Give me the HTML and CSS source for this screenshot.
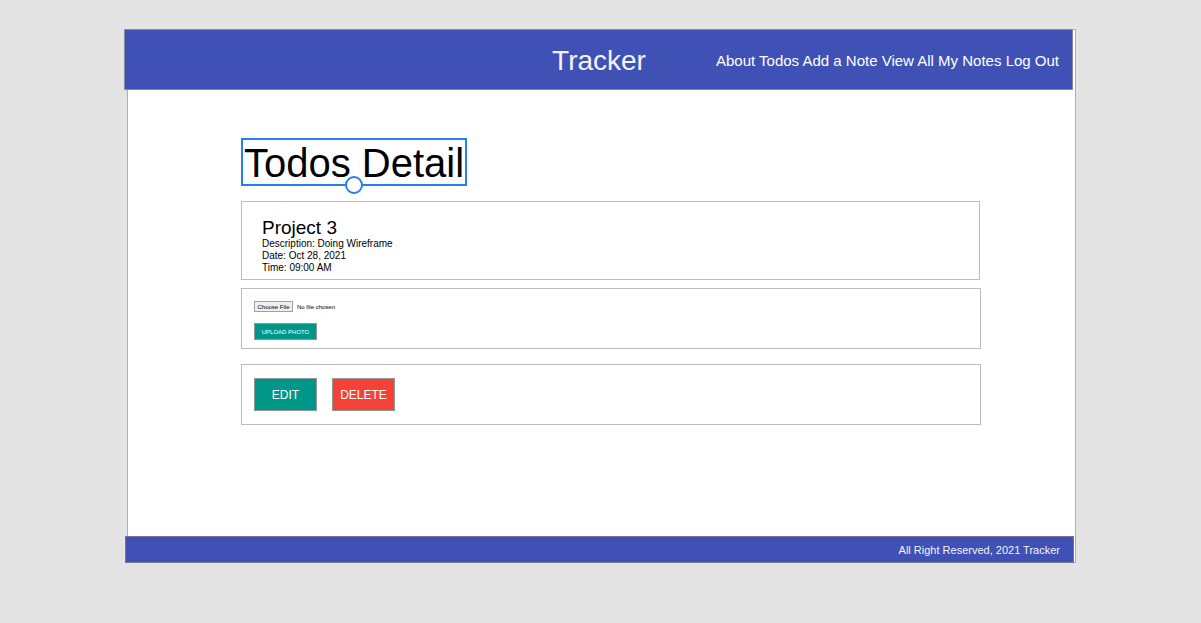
FILE: index.html
```html
<!DOCTYPE html>
<html lang="en">
<head>
<meta charset="utf-8">
<title>Tracker</title>
<link rel="stylesheet" href="styles.css">
</head>
<body>
<div class="frame">
  <header class="header">
    <span class="brand">Tracker</span>
    <nav class="nav">
      <a href="#about">About</a>
      <a href="#todos">Todos</a>
      <a href="#add">Add a Note</a>
      <a href="#notes">View All My Notes</a>
      <a href="#logout">Log Out</a>
    </nav>
  </header>
  <main class="main">
    <h1 class="title">Todos Detail<span class="handle"></span></h1>
    <section class="card details">
      <h2 class="project">Project 3</h2>
      <p>Description: Doing Wireframe</p>
      <p>Date: Oct 28, 2021</p>
      <p>Time: 09:00 AM</p>
    </section>
    <form class="card upload">
      <input class="file" type="file" aria-label="Photo">
      <button class="button small" type="button">UPLOAD PHOTO</button>
    </form>
    <section class="card actions">
      <button class="button" type="button">EDIT</button>
      <button class="button danger" type="button">DELETE</button>
    </section>
  </main>
  <footer class="footer">All Right Reserved, 2021 Tracker</footer>
</div>
</body>
</html>
```

FILE: styles.css
```css
* {
  box-sizing: border-box;
}

body {
  margin: 0;
  padding: 29px 125px 60px 127px;
  background: #e4e4e4;
  color: #000;
  font-family: "Liberation Sans", Arial, sans-serif;
}

h1, h2, p {
  margin: 0;
  font-weight: 400;
}

.frame {
  background: #fff;
  border: 1px solid #b0b0b0;
}

.header {
  display: grid;
  grid-template-columns: 1fr auto 1fr;
  align-items: center;
  height: 61px;
  margin: -1px 2px 0 -4px;
  padding: 2px 13px 0 0;
  background: #3f51b5;
  border: 1px solid #8488a0;
  color: #f4f4f8;
}

.brand {
  grid-column: 2;
  padding-left: 14px;
  font-size: 28px;
  line-height: 32px;
}

.nav {
  justify-self: end;
  color: #fff;
  font-size: 15px;
  line-height: 20px;
  white-space: nowrap;
}

.nav a {
  color: inherit;
  text-decoration: none;
}

.main {
  display: flex;
  flex-direction: column;
  padding: 48px 94px 111px 113px;
}

.title {
  position: relative;
  align-self: flex-start;
  padding: 2px 1px 0;
  border: 2px solid #2680eb;
  font-size: 40px;
  line-height: 42px;
}

.handle {
  position: absolute;
  left: 50%;
  bottom: -10px;
  width: 18px;
  height: 18px;
  margin-left: -9px;
  background: #fff;
  border: 2px solid #2680eb;
  border-radius: 50%;
}

.card {
  border: 1px solid #bcbcbc;
}

.details {
  margin: 15px 1px 8px 0;
  padding: 15px 20px 5px;
  font-size: 10px;
  line-height: 12px;
}

.project {
  font-size: 19px;
  line-height: 21px;
}

.upload {
  display: flex;
  flex-direction: column;
  align-items: flex-start;
  gap: 10px;
  margin-bottom: 15px;
  padding: 12px 12px 8px;
}

.file {
  width: 180px;
  height: 12px;
  font: 6px/8px "Liberation Sans", Arial, sans-serif;
}

.file::file-selector-button {
  width: 39px;
  height: 11px;
  margin: 0 4px 0 0;
  padding: 0;
  background: #efefef;
  border: 1px solid #a0a0a0;
  border-radius: 0;
  font: inherit;
}

.actions {
  display: flex;
  gap: 15px;
  padding: 13px 12px;
}

.button {
  width: 63px;
  height: 33px;
  padding: 0;
  background: #009688;
  border: 1px solid #8f9997;
  color: #fff;
  font: 12px/14px "Liberation Sans", Arial, sans-serif;
}

.small {
  height: 17px;
  font-size: 6px;
  line-height: 8px;
}

.danger {
  background: #f44336;
}

.footer {
  height: 27px;
  margin: 0 1px -1px -3px;
  padding-right: 13px;
  background: #3f51b5;
  border: 1px solid #74788f;
  color: #f4f4f8;
  font-size: 11px;
  line-height: 26px;
  text-align: right;
}
```
